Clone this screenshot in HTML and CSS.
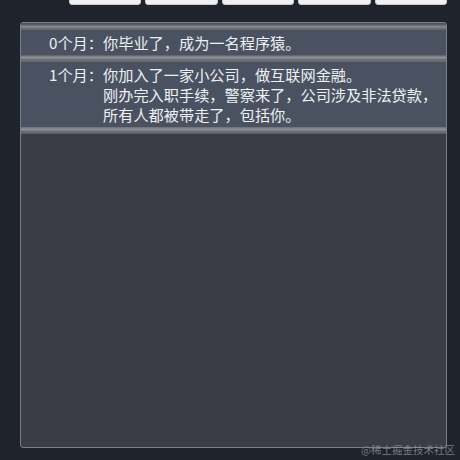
FILE: index.html
```html
<!DOCTYPE html>
<html lang="zh-CN">
<head>
<meta charset="utf-8">
<title>程序猿人生</title>
<link rel="stylesheet" href="styles.css">
</head>
<body>
<div class="page">
  <div class="toolbar">
    <button class="btn" type="button"></button>
    <button class="btn" type="button"></button>
    <button class="btn" type="button"></button>
    <button class="btn" type="button"></button>
    <button class="btn" type="button"></button>
  </div>
  <div class="panel">
    <div class="log">
      <div class="entry">
        <span class="month">0个月：</span>
        <div class="text">你毕业了，成为一名程序猿。</div>
      </div>
      <div class="entry">
        <span class="month">1个月：</span>
        <div class="text">你加入了一家小公司，做互联网金融。<br>刚办完入职手续，警察来了，公司涉及非法贷款，<br>所有人都被带走了，包括你。</div>
      </div>
    </div>
  </div>
</div>
<div class="watermark">@稀土掘金技术社区</div>
</body>
</html>
```
FILE: styles.css
```css
html, body {
  margin: 0;
  padding: 0;
  background: #1f232c;
  height: 100%;
  overflow: hidden;
}
body {
  font-family: "Noto Sans CJK SC", "Noto Sans", sans-serif;
  color: #eef0f3;
}
.page {
  padding: 0 13px 0 20px;
}
.toolbar {
  display: flex;
  justify-content: flex-end;
  gap: 4px;
  margin-top: -23px;
}
.btn {
  width: 72.4px;
  height: 28px;
  background: #f1f1f1;
  border: 1px solid #c9cbd0;
  border-radius: 3px;
  padding: 0;
}
.panel {
  margin-top: 17px;
  height: 424px;
  background: #3a3d46;
  border: 1px solid #7a7d84;
  border-radius: 3px;
  overflow: hidden;
}
.log::after {
  content: "";
  display: block;
  height: 7px;
  background: linear-gradient(to bottom, #6c7076 0, #7a7d83 1px, #8c8e93 2px, #8c8e93 3px, #6e7177 4px, #5a5d64 7px);
}
.entry {
  display: flex;
  padding: 9px 0 3px 28px;
  font-size: 15.2px;
  line-height: 20px;
  background:
    linear-gradient(to bottom, #5a5e66 0, #6c7077 1px, #8d9095 2px, #8d9095 3px, #72767c 4px, #61656d 7px) top / 100% 7px no-repeat,
    #4a5261;
}
.entry:first-child {
  background:
    linear-gradient(to bottom, #4c4f57 0, #5b5f67 2px, #7c8086 3px, #8a8d92 4px, #6e7278 5px, #60646c 7px) top / 100% 7px no-repeat,
    #4a5261;
}
.month {
  white-space: nowrap;
}
.text {
  white-space: nowrap;
}
.watermark {
  position: absolute;
  right: 5px;
  bottom: 4px;
  font-family: "Noto Sans CJK SC", sans-serif;
  font-size: 10.5px;
  line-height: 12px;
  color: rgba(150, 154, 162, 0.75);
}
```
